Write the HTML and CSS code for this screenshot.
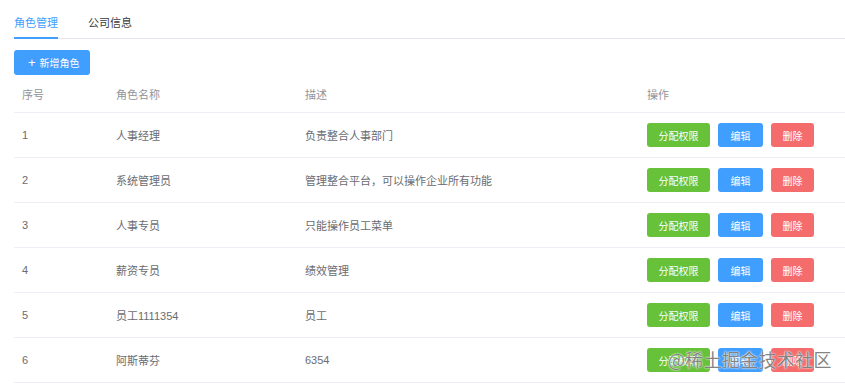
FILE: index.html
```html
<!DOCTYPE html>
<html lang="zh">
<head>
<meta charset="utf-8">
<link rel="stylesheet" href="styles.css">
</head>
<body>
<div class="page">
  <div class="tabs">
    <div class="tab active">角色管理</div>
    <div class="tab">公司信息</div>
  </div>
  <div class="toolbar">
    <button class="btn-add"><span class="plus">+</span>新增角色</button>
  </div>
  <div class="table">
    <div class="row head">
      <div class="c1">序号</div><div class="c2">角色名称</div><div class="c3">描述</div><div class="c4">操作</div>
    </div>
    <div class="row">
      <div class="c1">1</div><div class="c2">人事经理</div><div class="c3">负责整合人事部门</div>
      <div class="c4"><span class="b g">分配权限</span><span class="b p">编辑</span><span class="b r">删除</span></div>
    </div>
    <div class="row">
      <div class="c1">2</div><div class="c2">系统管理员</div><div class="c3">管理整合平台，可以操作企业所有功能</div>
      <div class="c4"><span class="b g">分配权限</span><span class="b p">编辑</span><span class="b r">删除</span></div>
    </div>
    <div class="row">
      <div class="c1">3</div><div class="c2">人事专员</div><div class="c3">只能操作员工菜单</div>
      <div class="c4"><span class="b g">分配权限</span><span class="b p">编辑</span><span class="b r">删除</span></div>
    </div>
    <div class="row">
      <div class="c1">4</div><div class="c2">薪资专员</div><div class="c3">绩效管理</div>
      <div class="c4"><span class="b g">分配权限</span><span class="b p">编辑</span><span class="b r">删除</span></div>
    </div>
    <div class="row">
      <div class="c1">5</div><div class="c2">员工1111354</div><div class="c3">员工</div>
      <div class="c4"><span class="b g">分配权限</span><span class="b p">编辑</span><span class="b r">删除</span></div>
    </div>
    <div class="row">
      <div class="c1">6</div><div class="c2">阿斯蒂芬</div><div class="c3">6354</div>
      <div class="c4"><span class="b g">分配权限</span><span class="b p">编辑</span><span class="b r">删除</span></div>
    </div>
  </div>
</div>
<div class="watermark">@稀土掘金技术社区</div>
</body>
</html>
```
FILE: styles.css
```css
html, body {
  margin: 0;
  padding: 0;
  background: #fff;
  font-family: "Liberation Sans", "Noto Sans CJK SC", sans-serif;
  color: #6a6c71;
  overflow: hidden;
}
.page {
  padding-left: 14px;
  height: 384px;
}
.tabs {
  display: flex;
  height: 38px;
  border-bottom: 1px solid #e4e7ed;
}
.tab {
  font-size: 11px;
  line-height: 14px;
  padding: 16px 15px 0;
  color: #3a3b3e;
  box-sizing: border-box;
  height: 38px;
}
.tab.active {
  padding-left: 0;
  color: #409eff;
  position: relative;
}
.tab.active::after {
  content: "";
  position: absolute;
  left: 0;
  right: 15px;
  bottom: -1px;
  height: 2px;
  background: #409eff;
}
.toolbar {
  padding-top: 11px;
  height: 25px;
}
.btn-add {
  display: flex;
  align-items: center;
  height: 25px;
  width: 76px;
  padding: 0 0 0 14px;
  border: 0;
  border-radius: 3px;
  background: #409eff;
  color: #fff;
  font-family: inherit;
  font-size: 10px;
}
.plus {
  font-size: 13px;
  margin-right: 4px;
  line-height: 1;
}
.table {
  margin-top: 1px;
}
.row {
  display: flex;
  align-items: center;
  height: 45px;
  border-bottom: 1px solid #ebeef5;
  font-size: 11px;
  box-sizing: border-box;
}
.row.head {
  height: 37px;
  color: #919399;
}
.row > div {
  padding-left: 8px;
  box-sizing: border-box;
}
.c1 { width: 94px; }
.c2 { width: 189px; }
.c3 { width: 342px; }
.c4 {
  flex: 1;
  display: flex;
  gap: 8px;
}
.b {
  display: inline-flex;
  align-items: center;
  justify-content: center;
  height: 24px;
  border-radius: 3px;
  color: #fff;
  font-size: 10px;
}
.b.g { background: #67c23a; width: 63px; }
.b.p { background: #409eff; width: 45px; }
.b.r { background: #f56c6c; width: 43px; }
.watermark {
  position: absolute;
  left: 668px;
  top: 346px;
  font-size: 18px;
  color: rgba(110, 110, 110, 0.85);
  text-shadow: 0 0 1px #fff, 0 0 2px #fff;
  font-family: "Noto Sans CJK SC", sans-serif;
  letter-spacing: 0.3px;
}
```
